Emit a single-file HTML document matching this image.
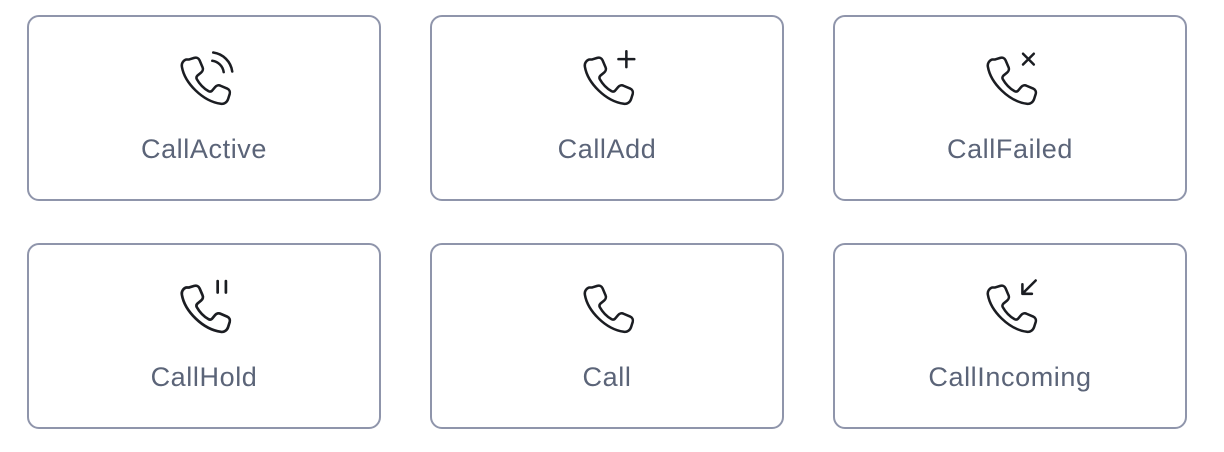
<!DOCTYPE html>
<html><head><style>
body{margin:0;background:#fff;width:1224px;height:452px;position:relative;font-family:"Liberation Sans",sans-serif;}
.c{position:absolute;width:350px;height:182px;border:2px solid #8f95ab;border-radius:12px;box-sizing:content-box;}
.c svg{position:absolute;left:138px;top:26px;}
.c span{position:absolute;left:0;right:0;top:117px;text-align:center;font-size:27px;letter-spacing:0.6px;color:#5b6478;}
</style></head><body>
<svg width="0" height="0" style="position:absolute"><defs>
<path id="ph" d="M7 5.2l1.6-.5c.7-.2 1.4.1 1.7.8l.9 2.1c.3.6.1 1.3-.4 1.7l-1.2 1c-.3.3-.4.7-.2 1.1.9 1.6 2.1 2.9 3.7 3.8.4.2.8.2 1.1-.1l1-1.2c.4-.5 1.1-.7 1.7-.4l2.1.9c.7.3 1 1 .8 1.7l-.5 1.6c-.3 1-1.3 1.7-2.3 1.5C11.3 18.4 5.6 12.7 4.7 7.5 4.5 6.5 5.1 5.5 6.1 5.2z"/>
</defs></svg>
<div class="c" style="left:27px;top:15px"><svg width="76" height="76" viewBox="0 0 24 24" fill="none" stroke="#1b1d22" stroke-width="0.8" stroke-linecap="round"><use href="#ph"/><path d="M14.3 5.6a4.2 4.2 0 0 1 3.6 3.6M14.6 3a7 7 0 0 1 6 6"/></svg><span>CallActive</span></div>
<div class="c" style="left:430px;top:15px"><svg width="76" height="76" viewBox="0 0 24 24" fill="none" stroke="#1b1d22" stroke-width="0.8" stroke-linecap="round"><use href="#ph"/><path d="M17.8 2.6v5M15.3 5.1h5"/></svg><span>CallAdd</span></div>
<div class="c" style="left:833px;top:15px"><svg width="76" height="76" viewBox="0 0 24 24" fill="none" stroke="#1b1d22" stroke-width="0.8" stroke-linecap="round"><use href="#ph"/><path d="M15.8 3.4l3.4 3.4M19.2 3.4l-3.4 3.4"/></svg><span>CallFailed</span></div>
<div class="c" style="left:27px;top:243px"><svg width="76" height="76" viewBox="0 0 24 24" fill="none" stroke="#1b1d22" stroke-width="0.85" stroke-linecap="round"><use href="#ph"/><path d="M16 3.2v3.6M18.6 3.2v3.6"/></svg><span>CallHold</span></div>
<div class="c" style="left:430px;top:243px"><svg width="76" height="76" viewBox="0 0 24 24" fill="none" stroke="#1b1d22" stroke-width="0.8" stroke-linecap="round"><use href="#ph"/></svg><span>Call</span></div>
<div class="c" style="left:833px;top:243px"><svg width="76" height="76" viewBox="0 0 24 24" fill="none" stroke="#1b1d22" stroke-width="0.8" stroke-linecap="round" stroke-linejoin="round"><use href="#ph"/><path d="M19.8 3l-4 4M15.6 4.2v3h3"/></svg><span>CallIncoming</span></div>
</body></html>
